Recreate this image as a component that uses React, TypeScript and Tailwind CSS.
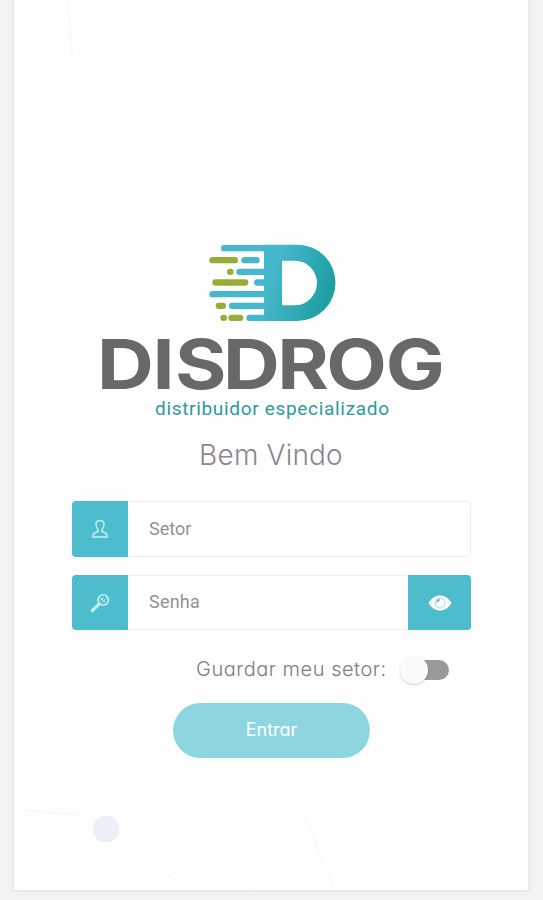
import { useState } from 'react';

type Bar = { x: number; y: number; width: number; color: string };

const BLUE = '#46b8cc';
const GREEN = '#98ad38';

const bars: Bar[] = [
  { x: 78, y: 30, width: 140, color: BLUE },
  { x: 43, y: 66, width: 86, color: GREEN },
  { x: 139, y: 66, width: 55, color: BLUE },
  { x: 96, y: 101, width: 20, color: GREEN },
  { x: 124, y: 101, width: 95, color: BLUE },
  { x: 52, y: 133, width: 108, color: GREEN },
  { x: 177, y: 133, width: 42, color: BLUE },
  { x: 43, y: 168, width: 175, color: BLUE },
  { x: 62, y: 203, width: 31, color: GREEN },
  { x: 102, y: 203, width: 116, color: BLUE },
  { x: 76, y: 239, width: 20, color: GREEN },
  { x: 100, y: 239, width: 45, color: GREEN },
  { x: 154, y: 239, width: 65, color: BLUE },
];

function Logo() {
  return (
    <svg viewBox="0 0 450 285" className="ml-[181px] h-[95px] w-[150px]" aria-hidden="true">
      <defs>
        <linearGradient id="logo-d" x1="0" y1="0" x2="1" y2="0.35">
          <stop offset="0.2" stopColor="#46b8cc" />
          <stop offset="1" stopColor="#1f9fa3" />
        </linearGradient>
      </defs>
      {bars.map((bar) => (
        <rect key={`${bar.x}-${bar.y}`} x={bar.x} y={bar.y} width={bar.width} height="19" rx="9.5" fill={bar.color} />
      ))}
      <path
        fill="url(#logo-d)"
        fillRule="evenodd"
        d="M207 29H307A114.5 114.5 0 0 1 307 258H207ZM261 77V211H299A67 67 0 0 0 299 77Z"
      />
    </svg>
  );
}

function Wordmark() {
  return (
    <svg viewBox="0 0 514 94" className="h-[94px] w-[514px] overflow-visible">
      <text
        x="72.800 121.500 141.300 183.300 231 274 326"
        y="58.500"
        fontSize="69"
        transform="scale(1.14 1)"
        className="fill-[#686868] font-['Inter',sans-serif] font-bold"
      >
        DISDROG
      </text>
      <text
        x="141"
        y="85"
        fontSize="19"
        textLength="234"
        className="fill-[#2b9b9d] font-['Roboto',sans-serif]"
      >
        distribuidor especializado
      </text>
    </svg>
  );
}

function UserIcon() {
  return (
    <svg viewBox="0 0 18 20" className="h-5 w-[18px]" fill="none" stroke="#c9f0f4" strokeWidth="1.400">
      <path d="M9 1.500C6.200 1.500 5 3 5 5.500C5 8 6 9.500 7 10.700V12.500L3.500 14C2 14.700 1.700 16 1.700 18H16.300C16.300 16 16 14.700 14.500 14L11 12.500V10.700C12 9.500 13 8 13 5.500C13 3 11.800 1.500 9 1.500Z" />
    </svg>
  );
}

function KeyIcon() {
  return (
    <svg viewBox="0 0 20 20" className="h-5 w-5" fill="none" stroke="#c9f0f4" strokeLinecap="round">
      <circle cx="13.200" cy="7" r="5.200" strokeWidth="1.600" />
      <path d="M9 11.200L2.300 17.500" strokeWidth="3.200" />
      <path d="M10.300 7.500L13.500 4.500M12 9.500L15.800 6M11 5.300L15 9" strokeWidth="1" />
    </svg>
  );
}

function EyeIcon() {
  return (
    <svg viewBox="0 0 24 18" className="h-[18px] w-6">
      <path fill="#fff" d="M.5 9C3.500 4 7.500 1.500 12 1.500S20.500 4 23.500 9C20.500 14 16.500 16.500 12 16.500S3.500 14 .5 9Z" />
      <circle cx="12" cy="9" r="5" fill="none" stroke="#a5dde5" strokeWidth="1" />
      <path d="M9 8.300A3.300 3.300 0 0 1 11.600 5.500" fill="none" stroke="#4dbccd" strokeWidth="1.800" />
    </svg>
  );
}

function Network() {
  return (
    <svg viewBox="0 0 514 890" className="pointer-events-none absolute inset-0 h-full w-full" fill="none" stroke="#f4f6f6">
      <path d="M54 0L58 55M99 0L136 52M5 810L69 815M104 841L176 890M240 888L348 811M289 811L320 890" />
      <circle cx="92" cy="829" r="13.500" fill="#ecf1f8" stroke="none" />
    </svg>
  );
}

export default function App() {
  const [sector, setSector] = useState('');
  const [password, setPassword] = useState('');
  const [showPassword, setShowPassword] = useState(false);
  const [remember, setRemember] = useState(false);

  return (
    <div className="h-[900px] w-[543px] overflow-hidden bg-[#f3f3f3] pl-3.5 font-['Inter',sans-serif]">
      <div className="relative h-[890px] w-[514px] bg-[#fefefe] pt-[235px] shadow-[0_0_0_1.5px_#e9e9e9,0_0_8px_#e8e8e8]">
        <Network />
        <div className="relative">
          <Logo />
          <Wordmark />

          <h1 className="mt-3 text-center text-[28px] leading-[38px] font-light tracking-[0.2px] text-[#8b8790] [font-feature-settings:'cv11']">
            Bem Vindo
          </h1>

          <form className="mt-[27px] ml-[58px] w-[399px]" onSubmit={(e) => e.preventDefault()}>
            <div className="flex h-14 overflow-hidden rounded">
              <span className="flex w-14 items-center justify-center bg-[#4dbccd]">
                <UserIcon />
              </span>
              <input
                value={sector}
                onChange={(e) => setSector(e.target.value)}
                placeholder="Setor"
                className="min-w-0 flex-1 rounded-r border border-l-0 border-[#eceff0] bg-white px-[21px] pb-0.5 font-['Roboto',sans-serif] text-[18px] text-gray-600 outline-none placeholder:text-[#929292]"
              />
            </div>

            <div className="mt-[18px] flex h-[55px] overflow-hidden rounded">
              <span className="flex w-14 items-center justify-center bg-[#4dbccd]">
                <KeyIcon />
              </span>
              <input
                type={showPassword ? 'text' : 'password'}
                value={password}
                onChange={(e) => setPassword(e.target.value)}
                placeholder="Senha"
                className="min-w-0 flex-1 border-y border-[#eceff0] bg-white px-[21px] pb-0.5 font-['Roboto',sans-serif] text-[18px] tracking-[0.2px] text-gray-600 outline-none placeholder:text-[#929292]"
              />
              <button
                type="button"
                onClick={() => setShowPassword(!showPassword)}
                className="flex w-[63px] items-center justify-center bg-[#4dbccd]"
              >
                <EyeIcon />
              </button>
            </div>

            <div className="mt-[23px] flex h-8 items-center pl-[124px]">
              <span className="w-[211px] text-[20px] font-light tracking-[0.52px] whitespace-nowrap text-[#7d7d7d] [font-feature-settings:'cv11']">
                Guardar meu setor:
              </span>
              <button
                type="button"
                onClick={() => setRemember(!remember)}
                className="mt-px flex h-5 w-[42px] items-center rounded-full bg-[#999]"
              >
                <span
                  className={`size-7 shrink-0 rounded-full bg-[#fafafa] shadow-[0_1px_2px_rgba(0,0,0,0.2)] ${remember ? 'ml-[21px]' : '-ml-[7px]'}`}
                />
              </button>
            </div>

            <button
              type="submit"
              className="mt-[18px] ml-[101px] block h-[55px] w-[197px] rounded-full bg-[#8dd6e1] pb-0.5 text-[18px] text-white [font-feature-settings:'cv11']"
            >
              Entrar
            </button>
          </form>
        </div>
      </div>
    </div>
  );
}
